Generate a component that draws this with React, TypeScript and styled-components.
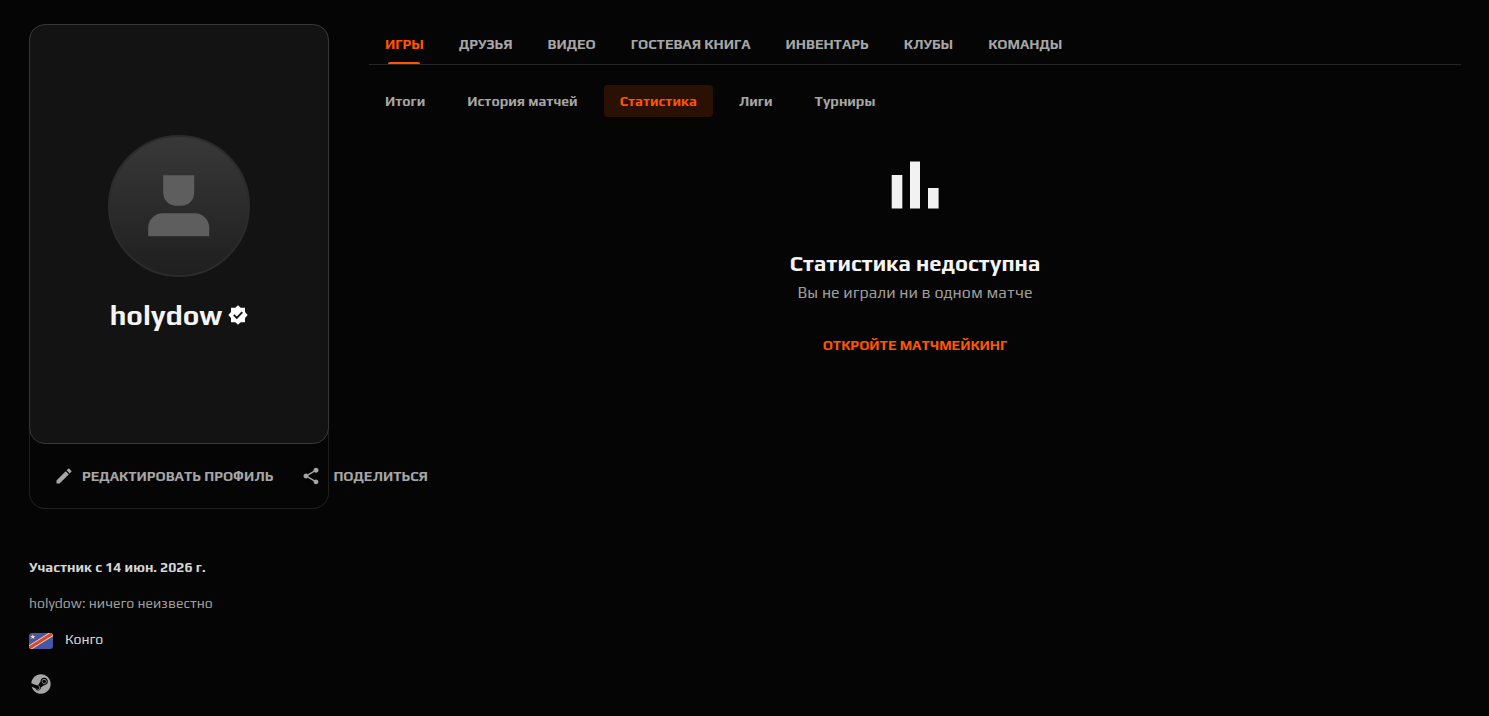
import React from "react";
import styled, { createGlobalStyle } from "styled-components";
import { MdEdit, MdShare } from "react-icons/md";
import { FaSteam } from "react-icons/fa";

const GlobalStyle = createGlobalStyle`
  *, *::before, *::after { box-sizing: border-box; }
  body {
    margin: 0;
    background: #050505;
    color: #f5f5f5;
    font-family: Play, "Noto Sans", sans-serif;
    font-size: 14px;
    line-height: 20px;
  }
  h1, h2, p, ul { margin: 0; padding: 0; }
  ul { list-style: none; }
`;

const Page = styled.div`
  display: grid;
  grid-template-columns: 300px minmax(0, 1fr);
  gap: 40px;
  padding: 24px 28px 20px 29px;
`;

const Sidebar = styled.aside`
  min-width: 0;
`;

const ProfileCard = styled.section`
  border: 1px solid #1f1f1f;
  border-top-color: transparent;
  border-radius: 16px;
`;

const Identity = styled.div`
  display: flex;
  flex-direction: column;
  align-items: center;
  justify-content: center;
  gap: 20px;
  min-height: 420px;
  margin: -1px -1px 0;
  background: #131313;
  border: 1px solid #373737;
  border-radius: 16px;
`;

const Avatar = styled.div`
  display: grid;
  place-items: center;
  width: 142px;
  height: 142px;
  border: 2px solid #2b2b2b;
  border-radius: 50%;
  background: linear-gradient(#383838, #1f1f1f);
`;

const NameRow = styled.div`
  display: flex;
  align-items: center;
  gap: 6px;
`;

const Name = styled.h1`
  color: #f5f5f5;
  font-size: 28px;
  line-height: 36px;
  font-weight: 700;
`;

const Actions = styled.div`
  display: flex;
  align-items: center;
  gap: 28px;
  height: 64px;
  padding-left: 24px;
`;

const Action = styled.button<{ $gap: number }>`
  display: flex;
  align-items: center;
  gap: ${({ $gap }) => $gap}px;
  flex: none;
  padding: 0;
  border: 0;
  background: none;
  color: #a6a6a6;
  font: inherit;
  font-weight: 700;
  text-transform: uppercase;
  white-space: nowrap;
  cursor: pointer;
`;

const About = styled.section`
  display: flex;
  flex-direction: column;
  gap: 16px;
  padding-top: 48px;
`;

const Since = styled.p`
  color: #d6d6d6;
  font-weight: 700;
`;

const Bio = styled.p`
  color: #9c9c9c;
`;

const Country = styled.p`
  display: flex;
  align-items: flex-end;
  gap: 12px;
  color: #d6d6d6;
`;

const SteamLink = styled.a`
  display: flex;
  width: 24px;
  margin-top: 7px;
  padding: 2px;
  color: #a6a6a6;
`;

const Main = styled.main`
  min-width: 0;
`;

const Tabs = styled.ul`
  display: flex;
  gap: 3px;
  border-bottom: 1px solid #262626;
`;

const Tab = styled.a<{ $active?: boolean }>`
  display: flex;
  flex-direction: column;
  align-items: center;
  height: 40px;
  padding: 10px 16px 0;
  color: ${({ $active }) => ($active ? "#ff5500" : "#a6a6a6")};
  font-weight: 700;
  text-transform: uppercase;
  text-decoration: none;
  white-space: nowrap;

  &::after {
    content: "";
    width: 32px;
    height: 2px;
    margin-top: 8px;
    border-radius: 2px 2px 0 0;
    background: ${({ $active }) => ($active ? "#ff5500" : "transparent")};
  }
`;

const SubTabs = styled.ul`
  display: flex;
  gap: 10px;
  padding-top: 20px;
`;

const SubTab = styled.a<{ $active?: boolean }>`
  display: block;
  padding: 6px 16px;
  border-radius: 4px;
  background: ${({ $active }) => ($active ? "#2b1103" : "transparent")};
  color: ${({ $active }) => ($active ? "#ff5500" : "#a6a6a6")};
  font-weight: 700;
  text-decoration: none;
  white-space: nowrap;
`;

const Empty = styled.section`
  display: flex;
  flex-direction: column;
  align-items: center;
  padding-top: 28px;
  text-align: center;
`;

const EmptyTitle = styled.h2`
  margin-top: 22px;
  font-size: 22px;
  line-height: 32px;
  font-weight: 700;
`;

const EmptyText = styled.p`
  margin-top: 2px;
  color: #9c9c9c;
  font-size: 16px;
  line-height: 24px;
`;

const EmptyAction = styled.a`
  margin-top: 30px;
  color: #ff5500;
  font-weight: 700;
  text-transform: uppercase;
  text-decoration: none;
`;

const PersonIcon = () => (
  <svg width="62" height="62" viewBox="0 0 62 62" fill="#5e5e5e" aria-hidden="true">
    <path d="M15.200 0.300h31v17.500a13 13 0 0 1-13 13h-5a13 13 0 0 1-13-13z" />
    <path d="M0.200 61.300v-8.500a14.500 14.500 0 0 1 14.500-14.500h32a14.500 14.500 0 0 1 14.500 14.500v8.500z" />
  </svg>
);

const VerifiedIcon = () => (
  <svg width="20" height="20" viewBox="0 0 20 20" role="img" aria-label="Подтверждён">
    <path
      fill="#fff"
      d="M10 0.300l2.700 2.500h4.300v4.300l2.700 2.900-2.700 2.900v4.300h-4.300l-2.700 2.500-2.700-2.500h-4.300v-4.300l-2.700-2.900 2.700-2.900v-4.300h4.300z"
    />
    <path fill="none" stroke="#131313" strokeWidth="1.900" d="M5.800 9.900l3 3 5.500-5.700" />
  </svg>
);

const ChartIcon = () => (
  <svg width="80" height="80" viewBox="0 0 80 80" fill="#f2f2f2" aria-hidden="true">
    <rect x="16.700" y="30" width="10.600" height="33.500" />
    <rect x="35" y="16.500" width="10" height="47" />
    <rect x="53" y="43" width="10.600" height="20.500" />
  </svg>
);

const CongoFlag = () => (
  <svg width="24" height="16" viewBox="0 0 24 16" aria-hidden="true">
    <defs>
      <clipPath id="flag-shape">
        <rect width="24" height="16" rx="3" />
      </clipPath>
    </defs>
    <g clipPath="url(#flag-shape)">
      <rect width="24" height="16" fill="#4757a6" />
      <path d="M-2 16.300L26-1" stroke="#f3d9a0" strokeWidth="5" />
      <path d="M-2 16.300L26-1" stroke="#dc4436" strokeWidth="3.200" />
      <path
        d="M3.800 1.300l.7 1.700 1.800.1-1.400 1.200.5 1.800-1.600-1-1.600 1 .5-1.800-1.400-1.200 1.800-.1z"
        fill="#f6dc9c"
      />
    </g>
  </svg>
);

const tabs = ["Игры", "Друзья", "Видео", "Гостевая книга", "Инвентарь", "Клубы", "Команды"];
const subTabs = ["Итоги", "История матчей", "Статистика", "Лиги", "Турниры"];

export default function App() {
  return (
    <>
      <GlobalStyle />
      <Page>
        <Sidebar>
          <ProfileCard>
            <Identity>
              <Avatar>
                <PersonIcon />
              </Avatar>
              <NameRow>
                <Name>holydow</Name>
                <VerifiedIcon />
              </NameRow>
            </Identity>
            <Actions>
              <Action type="button" $gap={8}>
                <MdEdit size={20} />
                Редактировать профиль
              </Action>
              <Action type="button" $gap={12}>
                <MdShare size={20} />
                Поделиться
              </Action>
            </Actions>
          </ProfileCard>
          <About>
            <Since>Участник с 14 июн. 2026 г.</Since>
            <Bio>holydow: ничего неизвестно</Bio>
            <Country>
              <CongoFlag />
              Конго
            </Country>
            <SteamLink href="#steam" aria-label="Steam">
              <FaSteam size={20} />
            </SteamLink>
          </About>
        </Sidebar>
        <Main>
          <nav>
            <Tabs>
              {tabs.map((label, i) => (
                <li key={label}>
                  <Tab href="#" $active={i === 0}>
                    {label}
                  </Tab>
                </li>
              ))}
            </Tabs>
          </nav>
          <nav>
            <SubTabs>
              {subTabs.map((label, i) => (
                <li key={label}>
                  <SubTab href="#" $active={i === 2}>
                    {label}
                  </SubTab>
                </li>
              ))}
            </SubTabs>
          </nav>
          <Empty>
            <ChartIcon />
            <EmptyTitle>Статистика недоступна</EmptyTitle>
            <EmptyText>Вы не играли ни в одном матче</EmptyText>
            <EmptyAction href="#matchmaking">Откройте матчмейкинг</EmptyAction>
          </Empty>
        </Main>
      </Page>
    </>
  );
}
